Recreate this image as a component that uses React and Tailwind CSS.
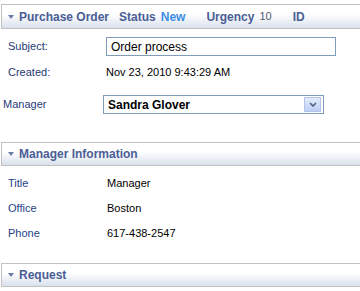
import React from 'react';

const Triangle = () => (
  <svg width="6" height="4" viewBox="0 0 6 4" className="shrink-0">
    <path d="M0 0 H6 L3 4 Z" fill="#6b7aa6" />
  </svg>
);

const SectionHeader = ({ children, tall }) => (
  <div
    className={`ml-px ${tall ? 'h-[25px]' : 'h-[24px]'} flex items-center pl-[6px] border border-r-0 border-[#c2c2c2] bg-gradient-to-b from-white from-40% to-[#d9e1ec] whitespace-nowrap overflow-hidden`}
  >
    <Triangle />
    {children}
  </div>
);

const Title = ({ children, className = '' }) => (
  <span className={`font-bold text-[12px] text-[#4b5d95] ${className}`}>{children}</span>
);

const Row = ({ label, value }) => (
  <div className="flex items-center h-[25px]">
    <span className="w-[107px] pl-[8px] text-[#233e86]">{label}</span>
    <span className="text-black">{value}</span>
  </div>
);

export default function App() {
  return (
    <div
      className="w-[360px] h-[291px] bg-white overflow-hidden text-[11px] pt-[4px]"
      style={{ fontFamily: '"Liberation Sans", Arial, sans-serif' }}
    >
      <SectionHeader tall>
        <Title className="ml-[5px]">Purchase Order</Title>
        <Title className="ml-[10px]">Status</Title>
        <span className="font-bold text-[12px] text-[#3b8de4] ml-[5px]">New</span>
        <Title className="ml-[21px]">Urgency</Title>
        <span className="text-[11px] text-[#555c70] ml-[5px]">10</span>
        <Title className="ml-[21px]">ID</Title>
      </SectionHeader>

      <div className="flex items-center mt-[8px] h-[19px]">
        <span className="w-[106px] pl-[8px] text-[#1f3a7a]">Subject:</span>
        <div className="w-[230px] h-[19px] border border-[#7f9db9] flex items-center pl-[4px] text-black text-[12px]">
          Order process
        </div>
      </div>
      <div className="flex items-center mt-[7px] h-[18px]">
        <span className="w-[106px] pl-[8px] text-[#1f3a7a]">Created:</span>
        <span className="text-black">Nov 23, 2010 9:43:29 AM</span>
      </div>
      <div className="flex items-center mt-[14px] h-[19px]">
        <span className="w-[103px] pl-[3px] text-[#1f3a7a]">Manager</span>
        <div className="w-[221px] h-[19px] border border-[#7f9db9] flex items-center pl-[4px] pr-[2px]">
          <span className="flex-1 font-bold text-[12px] text-black">Sandra Glover</span>
          <div className="w-[17px] h-[15px] border border-[#b2c4e8] bg-gradient-to-b from-[#e4ecfc] to-[#bccff5] flex items-center justify-center">
            <svg width="8" height="5" viewBox="0 0 8 5">
              <path d="M1 1 L4 4 L7 1" fill="none" stroke="#4d6185" strokeWidth="1.6" />
            </svg>
          </div>
        </div>
      </div>

      <div className="mt-[28px]">
        <SectionHeader>
          <Title className="ml-[5px]">Manager Information</Title>
        </SectionHeader>
      </div>
      <div className="mt-[5px]">
        <Row label="Title" value="Manager" />
        <Row label="Office" value="Boston" />
        <Row label="Phone" value="617-438-2547" />
      </div>

      <div className="mt-[17px]">
        <SectionHeader>
          <Title className="ml-[5px]">Request</Title>
        </SectionHeader>
      </div>
    </div>
  );
}
